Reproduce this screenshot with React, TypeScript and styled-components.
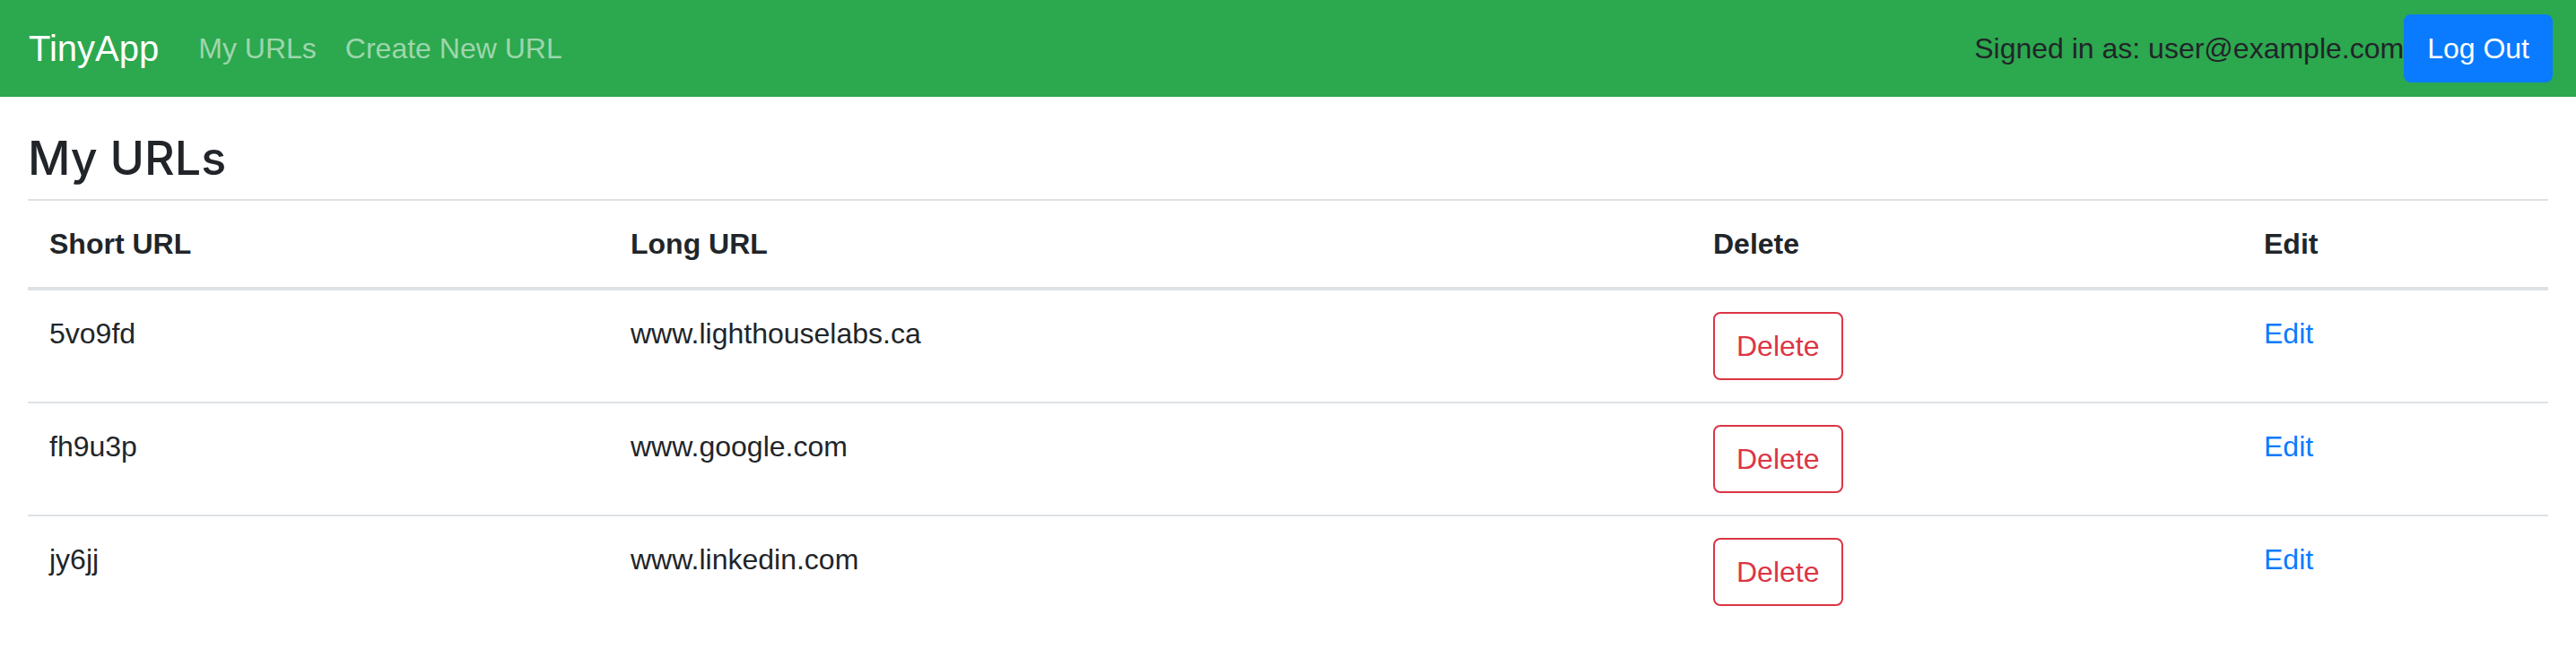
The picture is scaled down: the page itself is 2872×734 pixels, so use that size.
import React from "react";
import styled, { createGlobalStyle } from "styled-components";

const urls = [
  { short: "5vo9fd", long: "www.lighthouselabs.ca" },
  { short: "fh9u3p", long: "www.google.com" },
  { short: "jy6jj", long: "www.linkedin.com" },
];

const GlobalStyle = createGlobalStyle`
  html, body { margin: 0; padding: 0; background: #fff; }
  body {
    font-family: "Liberation Sans", Arial, sans-serif;
    font-size: 32px;
    line-height: 1.5;
    color: #212529;
  }
  * { box-sizing: border-box; }
`;

export default function App() {
  return (
    <>
      <GlobalStyle />
      <Navbar>
        <Brand>TinyApp</Brand>
        <NavLinks>
          <NavLink href="#">My URLs</NavLink>
          <NavLink href="#">Create New URL</NavLink>
        </NavLinks>
        <UserArea>
          <SignedIn>Signed in as: user@example.com</SignedIn>
          <LogOut>Log Out</LogOut>
        </UserArea>
      </Navbar>
      <Main>
        <Title>My URLs</Title>
        <Table>
          <colgroup>
            <col style={{ width: 648 }} />
            <col style={{ width: 1207 }} />
            <col style={{ width: 614 }} />
            <col style={{ width: 341 }} />
          </colgroup>
          <thead>
            <tr>
              <Th>Short URL</Th>
              <Th>Long URL</Th>
              <Th>Delete</Th>
              <Th>Edit</Th>
            </tr>
          </thead>
          <tbody>
            {urls.map((u) => (
              <tr key={u.short}>
                <Td>{u.short}</Td>
                <Td>{u.long}</Td>
                <Td>
                  <DeleteBtn>Delete</DeleteBtn>
                </Td>
                <Td>
                  <EditLink href="#">Edit</EditLink>
                </Td>
              </tr>
            ))}
          </tbody>
        </Table>
      </Main>
    </>
  );
}

const Navbar = styled.nav`
  display: flex;
  align-items: center;
  height: 108px;
  padding: 16px 26px 16px 32px;
  background: #2ca84e;
`;
const Brand = styled.div`
  font-size: 40px;
  line-height: 1.5;
  padding: 10px 0;
  margin-right: 28px;
  color: #fff;
`;
const NavLinks = styled.div`
  display: flex;
  flex: 1;
`;
const NavLink = styled.a`
  padding: 16px;
  color: rgba(255, 255, 255, 0.55);
  text-decoration: none;
`;
const UserArea = styled.div`
  display: flex;
  align-items: center;
`;
const SignedIn = styled.span`
  color: #212529;
`;
const LogOut = styled.button`
  font: inherit;
  line-height: 1.5;
  color: #fff;
  background: #0a7bff;
  border: 2px solid #0a7bff;
  border-radius: 8px;
  padding: 12px 24px;
`;
const Main = styled.main`
  padding: 0 31px;
`;
const Title = styled.h3`
  font-family: Inter, "Liberation Sans", sans-serif;
  font-size: 52px;
  font-weight: 500;
  line-height: 1.2;
  margin: 38px 0 14px;
`;
const Table = styled.table`
  width: 100%;
  border-collapse: collapse;
  table-layout: fixed;
`;
const Th = styled.th`
  text-align: left;
  font-weight: 700;
  padding: 24px;
  border-top: 2px solid #dee2e6;
  border-bottom: 4px solid #dee2e6;
  vertical-align: bottom;
`;
const Td = styled.td`
  padding: 24px;
  border-top: 2px solid #dee2e6;
  vertical-align: top;
`;
const DeleteBtn = styled.button`
  font: inherit;
  line-height: 1.5;
  color: #dc3545;
  background: transparent;
  border: 2px solid #dc3545;
  border-radius: 8px;
  padding: 12px 24px;
`;
const EditLink = styled.a`
  color: #0a7bff;
  text-decoration: none;
`;
